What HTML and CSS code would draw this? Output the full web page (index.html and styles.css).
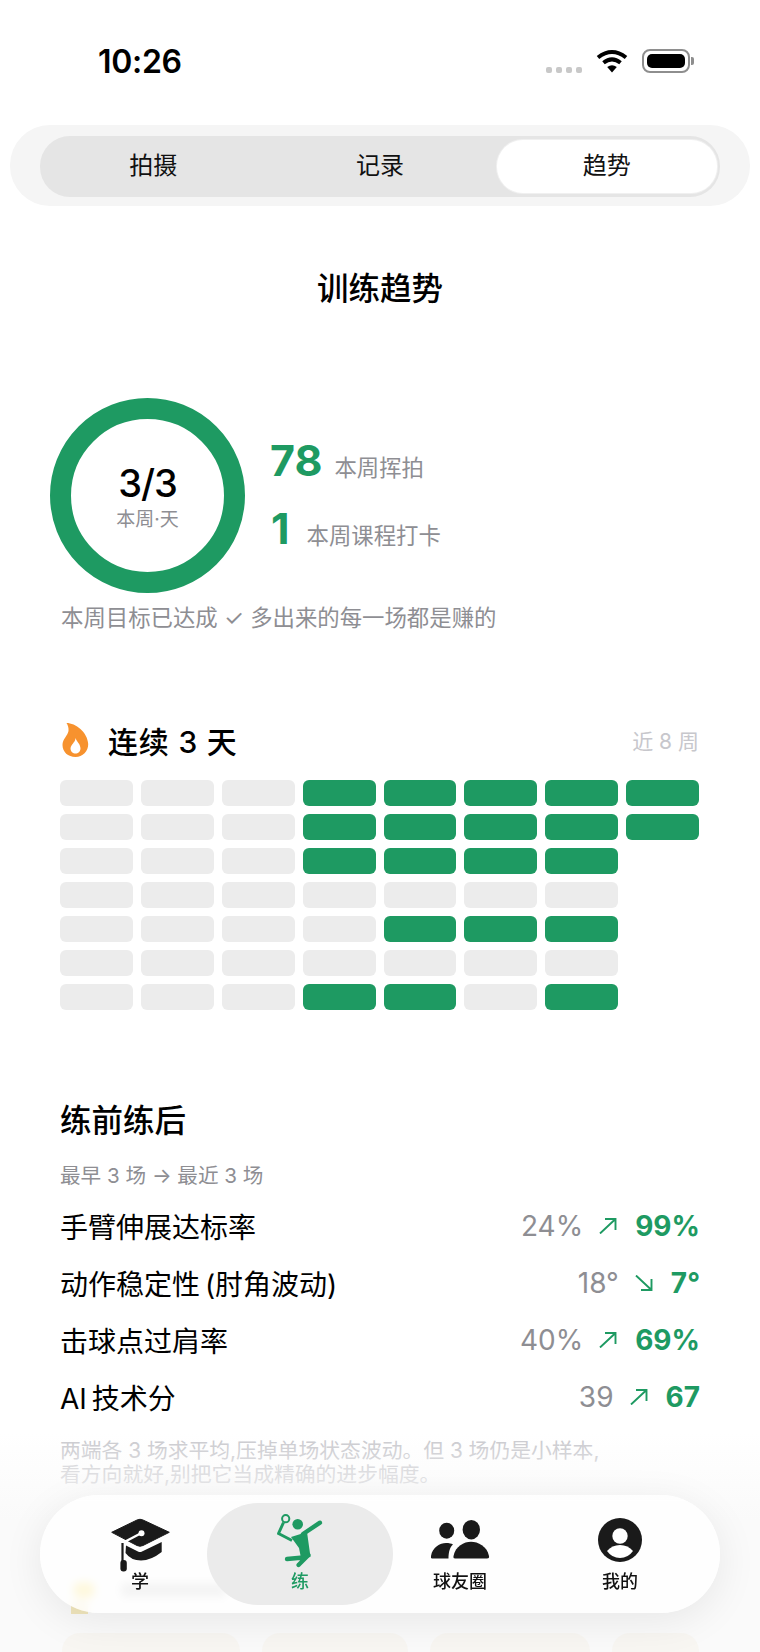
FILE: index.html
```html
<!DOCTYPE html>
<html lang="zh-CN">
<head>
  <meta charset="utf-8">
  <title>训练趋势</title>
  <link rel="stylesheet" href="styles.css">
</head>
<body>
  <div class="screen">
    <div class="status-bar">
      <span class="time">10:26</span>
      <div class="status-icons">
        <div class="signal"><i></i><i></i><i></i><i></i></div>
        <svg class="wifi" viewBox="0 0 32 24">
          <path d="M2 8.5Q16 -2.5 30 8.5M7.5 13.8Q16 7 24.5 13.8" fill="none" stroke="#000" stroke-width="4"/>
          <path d="M16 23.5L11.2 18Q16 14.4 20.8 18Z" fill="#000"/>
        </svg>
        <div class="battery"><div class="battery-fill"></div></div>
        <div class="battery-nub"></div>
      </div>
    </div>

    <div class="segment-wrap">
      <div class="segment">
        <div class="segment-item">拍摄</div>
        <div class="segment-item">记录</div>
        <div class="segment-item active">趋势</div>
      </div>
    </div>

    <h1 class="page-title">训练趋势</h1>

    <div class="summary">
      <div class="ring">
        <div class="ring-value">3/3</div>
        <div class="ring-label">本周·天</div>
      </div>
      <div class="stats">
        <div class="stat"><span class="stat-num">78</span><span class="stat-label">本周挥拍</span></div>
        <div class="stat stat-one"><span class="stat-num">1</span><span class="stat-label">本周课程打卡</span></div>
      </div>
    </div>
    <p class="goal-note">本周目标已达成 ✓ 多出来的每一场都是赚的</p>

    <div class="streak-head">
      <svg class="flame" viewBox="0 0 26 34">
        <path d="M4 0C13 0 25 9 25.7 21C26 28 20 34 13 34C5.5 34 0 29 0 22C0 16 5 13 6 8C6.3 5 5.5 2 4 0Z" fill="#f7922e"/>
        <path d="M13 15C14 18.5 18 21 18 25.5C18 28.5 15.5 30.5 13 30.5C10.5 30.5 8 28.5 8 25.5C8 23 9.5 22 10.5 20.5C11.5 19 13 17.5 13 15Z" fill="#fff"/>
      </svg>
      <span class="streak-title">连续 3 天</span>
      <span class="streak-range">近 8 周</span>
    </div>
    <div class="calendar" id="calendar"></div>

    <h2 class="compare-title">练前练后</h2>
    <div class="compare-sub">最早 3 场 → 最近 3 场</div>
    <div class="compare-list">
      <div class="compare-row">
        <span class="compare-name">手臂伸展达标率</span>
        <span class="val-before">24%</span>
        <svg class="trend" viewBox="0 0 18 16"><path d="M1 15.5L16.5 1M6 1H16.5V12" fill="none" stroke="#1e9a62" stroke-width="1.9"/></svg>
        <span class="val-after">99%</span>
      </div>
      <div class="compare-row">
        <span class="compare-name">动作稳定性 (肘角波动)</span>
        <span class="val-before">18°</span>
        <svg class="trend" viewBox="0 0 18 16"><path d="M1 .5L16.5 15M6 15H16.5V4" fill="none" stroke="#1e9a62" stroke-width="1.9"/></svg>
        <span class="val-after">7°</span>
      </div>
      <div class="compare-row">
        <span class="compare-name">击球点过肩率</span>
        <span class="val-before">40%</span>
        <svg class="trend" viewBox="0 0 18 16"><path d="M1 15.5L16.5 1M6 1H16.5V12" fill="none" stroke="#1e9a62" stroke-width="1.9"/></svg>
        <span class="val-after">69%</span>
      </div>
      <div class="compare-row">
        <span class="compare-name">AI 技术分</span>
        <span class="val-before">39</span>
        <svg class="trend" viewBox="0 0 18 16"><path d="M1 15.5L16.5 1M6 1H16.5V12" fill="none" stroke="#1e9a62" stroke-width="1.9"/></svg>
        <span class="val-after">67</span>
      </div>
    </div>
    <p class="compare-note">两端各 3 场求平均,压掉单场状态波动。但 3 场仍是小样本,<br>看方向就好,别把它当成精确的进步幅度。</p>

    <div class="fog"></div>

    <!-- next section, scrolled mostly under the tab bar -->
    <div class="next-section">
      <div class="next-head">
        <div class="next-icon"></div>
        <div class="next-bar"></div>
      </div>
      <div class="next-tan"></div>
      <div class="next-cards">
        <div class="next-card"></div>
        <div class="next-card"></div>
        <div class="next-card"></div>
        <div class="next-card"></div>
      </div>
    </div>

    <nav class="tabbar">
      <div class="tab">
        <svg class="tab-icon icon-hat" viewBox="10 22 60 56">
          <path d="M11.7 37.3L37 25Q40 23.5 43 25L69.3 37.3L43 50.5Q40 52 37 50.5Z" fill="#1a1a1a" stroke="#1a1a1a" stroke-linejoin="round"/>
          <path d="M26 50.5L38 56.5Q40 57.5 42 56.5L61.7 47V57Q51 65.5 41 65.5Q31 65.5 25.5 58Z" fill="#1a1a1a"/>
          <path d="M41 38.3L22 48.3" fill="none" stroke="#fff" stroke-width="2.4"/>
          <circle cx="41.5" cy="38.3" r="3" fill="#fff"/>
          <path d="M22.5 48V66" fill="none" stroke="#1a1a1a" stroke-width="2.2"/>
          <rect x="20.4" y="65" width="6.4" height="11.5" rx="3" fill="#1a1a1a"/>
        </svg>
        <span>学</span>
      </div>
      <div class="tab active">
        <svg class="tab-icon icon-player" viewBox="0 0 48 56">
          <circle cx="9.7" cy="5.7" r="3.6" fill="none" stroke="#1e9a62" stroke-width="2"/>
          <path d="M7.5 9.5L2.5 20.5L16 27.5" fill="none" stroke="#1e9a62" stroke-width="3" stroke-linejoin="round"/>
          <circle cx="21.7" cy="11.3" r="5.3" fill="#1e9a62"/>
          <path d="M44 9.7L27 21" fill="none" stroke="#1e9a62" stroke-width="4.4" stroke-linecap="round"/>
          <path d="M15 24L31 19L34.5 44L25 45L23 35Z" fill="#1e9a62"/>
          <path d="M11 46L27 44.5M32.5 42L22.5 52" fill="none" stroke="#1e9a62" stroke-width="4.4" stroke-linecap="round"/>
        </svg>
        <span>练</span>
      </div>
      <div class="tab">
        <svg class="tab-icon icon-people" viewBox="0 0 60 42">
          <ellipse cx="16.7" cy="11.7" rx="7.5" ry="8" fill="#1a1a1a"/>
          <ellipse cx="41.3" cy="10.7" rx="8.7" ry="9.7" fill="#1a1a1a"/>
          <path d="M25 39.5Q23 39.5 23.5 37C25.5 27 34 22.7 41 22.7C48 22.7 57 27 59 37Q59.5 39.5 57 39.5Z" fill="#1a1a1a"/>
          <path d="M2 39.5Q.5 39.5 1 37C2.5 28 10 24 16 24C19 24 21.5 24.5 23 25.5C20 28 18.5 33 18.5 39.5Z" fill="#1a1a1a"/>
        </svg>
        <span>球友圈</span>
      </div>
      <div class="tab">
        <svg class="tab-icon icon-me" viewBox="0 0 44 44">
          <circle cx="22" cy="22" r="22" fill="#1a1a1a"/>
          <circle cx="22" cy="18" r="7.7" fill="#fff"/>
          <path d="M9 33Q14 27 22 27Q30 27 35 33Q30 40 22 40Q14 40 9 33Z" fill="#fff"/>
        </svg>
        <span>我的</span>
      </div>
    </nav>
  </div>

  <script>
    // 1 = trained that day; rows are weekdays, columns are weeks
    const rows = [
      [0, 0, 0, 1, 1, 1, 1, 1],
      [0, 0, 0, 1, 1, 1, 1, 1],
      [0, 0, 0, 1, 1, 1, 1],
      [0, 0, 0, 0, 0, 0, 0],
      [0, 0, 0, 0, 1, 1, 1],
      [0, 0, 0, 0, 0, 0, 0],
      [0, 0, 0, 1, 1, 0, 1]
    ];
    const calendar = document.getElementById('calendar');
    rows.forEach(row => {
      row.forEach(on => {
        const cell = document.createElement('div');
        cell.className = on ? 'cell on' : 'cell';
        calendar.appendChild(cell);
      });
      // keep the grid aligned when a week has not happened yet
      for (let i = row.length; i < 8; i++) {
        calendar.appendChild(document.createElement('div'));
      }
    });
  </script>
</body>
</html>
```

FILE: styles.css
```css
* {
  box-sizing: border-box;
}
body {
  margin: 0;
  background: #fff;
  color: #000;
  font-family: Inter, "Noto Sans CJK SC", sans-serif;
}
.screen {
  position: relative;
  width: 760px;
  height: 1652px;
  overflow: hidden;
  padding-top: 44px;
}
.status-bar {
  display: flex;
  justify-content: space-between;
  align-items: center;
  height: 34px;
  padding: 0 66px 0 98px;
}
.time {
  font-size: 32px;
  font-weight: 600;
  letter-spacing: -0.3px;
}
.status-icons {
  display: flex;
  align-items: center;
}
.signal {
  display: flex;
  gap: 4px;
  margin: 17px 14px 0 0;
}
.signal i {
  width: 6px;
  height: 6px;
  border-radius: 2px;
  background: #c8c8c8;
}
.wifi {
  width: 32px;
  height: 24px;
  margin: -1px 14px 0 0;
}
.battery {
  width: 48px;
  height: 24px;
  padding: 3px;
  border: 2px solid #8e8e8e;
  border-radius: 8px;
}
.battery-fill {
  height: 100%;
  background: #000;
  border-radius: 5px;
}
.battery-nub {
  width: 3px;
  height: 8px;
  margin-left: 1px;
  background: #8e8e8e;
  border-radius: 0 2px 2px 0;
}
.segment-wrap {
  margin: 47px 10px 0;
  height: 81px;
  padding: 11px 30px 0;
  background: #f5f5f5;
  border-radius: 40px;
}
.segment {
  display: grid;
  grid-template-columns: repeat(3, 1fr);
  height: 61px;
  padding: 4px 0;
  background: #e5e5e5;
  border-radius: 30px;
}
.segment-item {
  display: flex;
  align-items: center;
  justify-content: center;
  padding-bottom: 6px;
  font-size: 24px;
  color: #111;
  border-radius: 26px;
}
.segment-item.active {
  margin: 0 3px 0 4px;
  padding-right: 1px;
  background: #fff;
  box-shadow: 0 0 0 1px #f0f0f0;
}
.page-title {
  margin: 60px 0 0;
  font-size: 31.5px;
  line-height: 46px;
  font-weight: 500;
  text-align: center;
}
.summary {
  display: flex;
  align-items: center;
  margin: 86px 0 0 50px;
}
.ring {
  display: flex;
  flex-direction: column;
  align-items: center;
  justify-content: center;
  width: 195px;
  height: 195px;
  border: 21px solid #1e9a62;
  border-radius: 50%;
}
.ring-value {
  margin-bottom: 4px;
  font-size: 38px;
  line-height: 44px;
  font-weight: 500;
  letter-spacing: -1px;
}
.ring-label {
  font-size: 19px;
  line-height: 22px;
  color: #8e8e93;
}
.stats {
  margin: 0 0 4px 25px;
}
.stat {
  display: flex;
  align-items: baseline;
  height: 68px;
}
.stat-num {
  font-size: 43px;
  line-height: 68px;
  font-weight: 700;
  color: #1e9a62;
}
.stat-label {
  margin-left: 12px;
  font-size: 22.4px;
  color: #8e8e93;
}
.stat-one .stat-num {
  padding-left: 1px;
}
.stat-one .stat-label {
  margin-left: 17px;
}
.goal-note {
  margin: 9px 0 0 61px;
  font-size: 22.4px;
  line-height: 32px;
  color: #8e8e93;
}
.streak-head {
  display: flex;
  align-items: center;
  margin: 86px 61px 0 62px;
  height: 40px;
}
.flame {
  width: 27px;
  height: 34px;
}
.streak-title {
  margin-left: 19px;
  font-size: 30px;
  font-weight: 500;
  letter-spacing: 0.8px;
}
.streak-range {
  margin-left: auto;
  font-size: 21px;
  color: #c7c7cc;
}
.calendar {
  display: grid;
  grid-template-columns: repeat(8, 1fr);
  grid-auto-rows: 26px;
  gap: 8px;
  margin: 20px 61px 0 60px;
}
.cell {
  background: #ececec;
  border-radius: 6px;
}
.cell.on {
  background: #1e9a62;
}
.compare-title {
  margin: 89px 0 0 60px;
  font-size: 31.5px;
  line-height: 44px;
  font-weight: 500;
}
.compare-sub {
  margin: 19px 0 0 60px;
  font-size: 20.6px;
  line-height: 28px;
  color: #8e8e93;
}
.compare-list {
  margin: 7px 60px 0 60px;
}
.compare-row {
  display: flex;
  align-items: center;
  height: 57px;
}
.compare-name {
  margin-right: auto;
  font-size: 28px;
  word-spacing: -3px;
}
.val-before {
  font-size: 28px;
  color: #8e8e93;
}
.trend {
  width: 18px;
  height: 16px;
  margin: 0 18px 0 16px;
}
.val-after {
  font-size: 28px;
  font-weight: 700;
  color: #1e9a62;
}
.compare-note {
  margin: 14px 0 0 60px;
  font-size: 20.8px;
  line-height: 24px;
  color: #c7c7cc;
}
.fog {
  position: absolute;
  left: 0;
  right: 0;
  bottom: 0;
  height: 220px;
  background: linear-gradient(rgba(255, 255, 255, 0), #fafafa 40%, #fafafa);
}
.next-section {
  position: relative;
  margin: 95px 0 0;
}
.next-head {
  display: flex;
  align-items: center;
  height: 16px;
  padding-left: 73px;
}
.next-icon {
  width: 22px;
  height: 16px;
  background: #f8dc5a;
  border-radius: 8px;
}
.next-bar {
  width: 105px;
  height: 14px;
  margin-left: 26px;
  background: #c8c8c8;
  border-radius: 4px;
}
.next-tan {
  width: 17px;
  height: 13px;
  margin: 3px 0 0 71px;
  background: #f1e6bd;
}
.next-cards {
  display: grid;
  grid-template-columns: 178px 146px 160px 87px;
  gap: 22px;
  height: 60px;
  margin: 19px 0 0 62px;
}
.next-card {
  background: #f8f6f2;
  border-radius: 18px;
}
.tabbar {
  position: absolute;
  left: 40px;
  top: 1495px;
  display: grid;
  grid-template-columns: repeat(4, 160px);
  align-items: center;
  width: 680px;
  height: 118px;
  padding: 8px 20px;
  background: rgba(255, 255, 255, 0.8);
  -webkit-backdrop-filter: blur(4px);
  backdrop-filter: blur(4px);
  border-radius: 59px;
  box-shadow: 0 8px 40px rgba(0, 0, 0, 0.08);
}
.tab {
  display: flex;
  flex-direction: column;
  align-items: center;
  justify-content: flex-end;
  height: 102px;
  padding-bottom: 11px;
  font-size: 18px;
  line-height: 24px;
  font-weight: 500;
  color: #111;
}
.tab.active {
  margin: 0 -13px;
  color: #1e9a62;
  background: #ebebeb;
  border-radius: 51px;
}
.tab-icon {
  display: block;
  flex: none;
}
.icon-hat {
  width: 60px;
  height: 56px;
  margin-bottom: -3px;
}
.icon-player {
  width: 48px;
  height: 56px;
  margin-bottom: 1px;
}
.icon-people {
  width: 60px;
  height: 42px;
  margin-bottom: 9px;
}
.icon-me {
  width: 44px;
  height: 44px;
  margin-bottom: 8px;
}
```
